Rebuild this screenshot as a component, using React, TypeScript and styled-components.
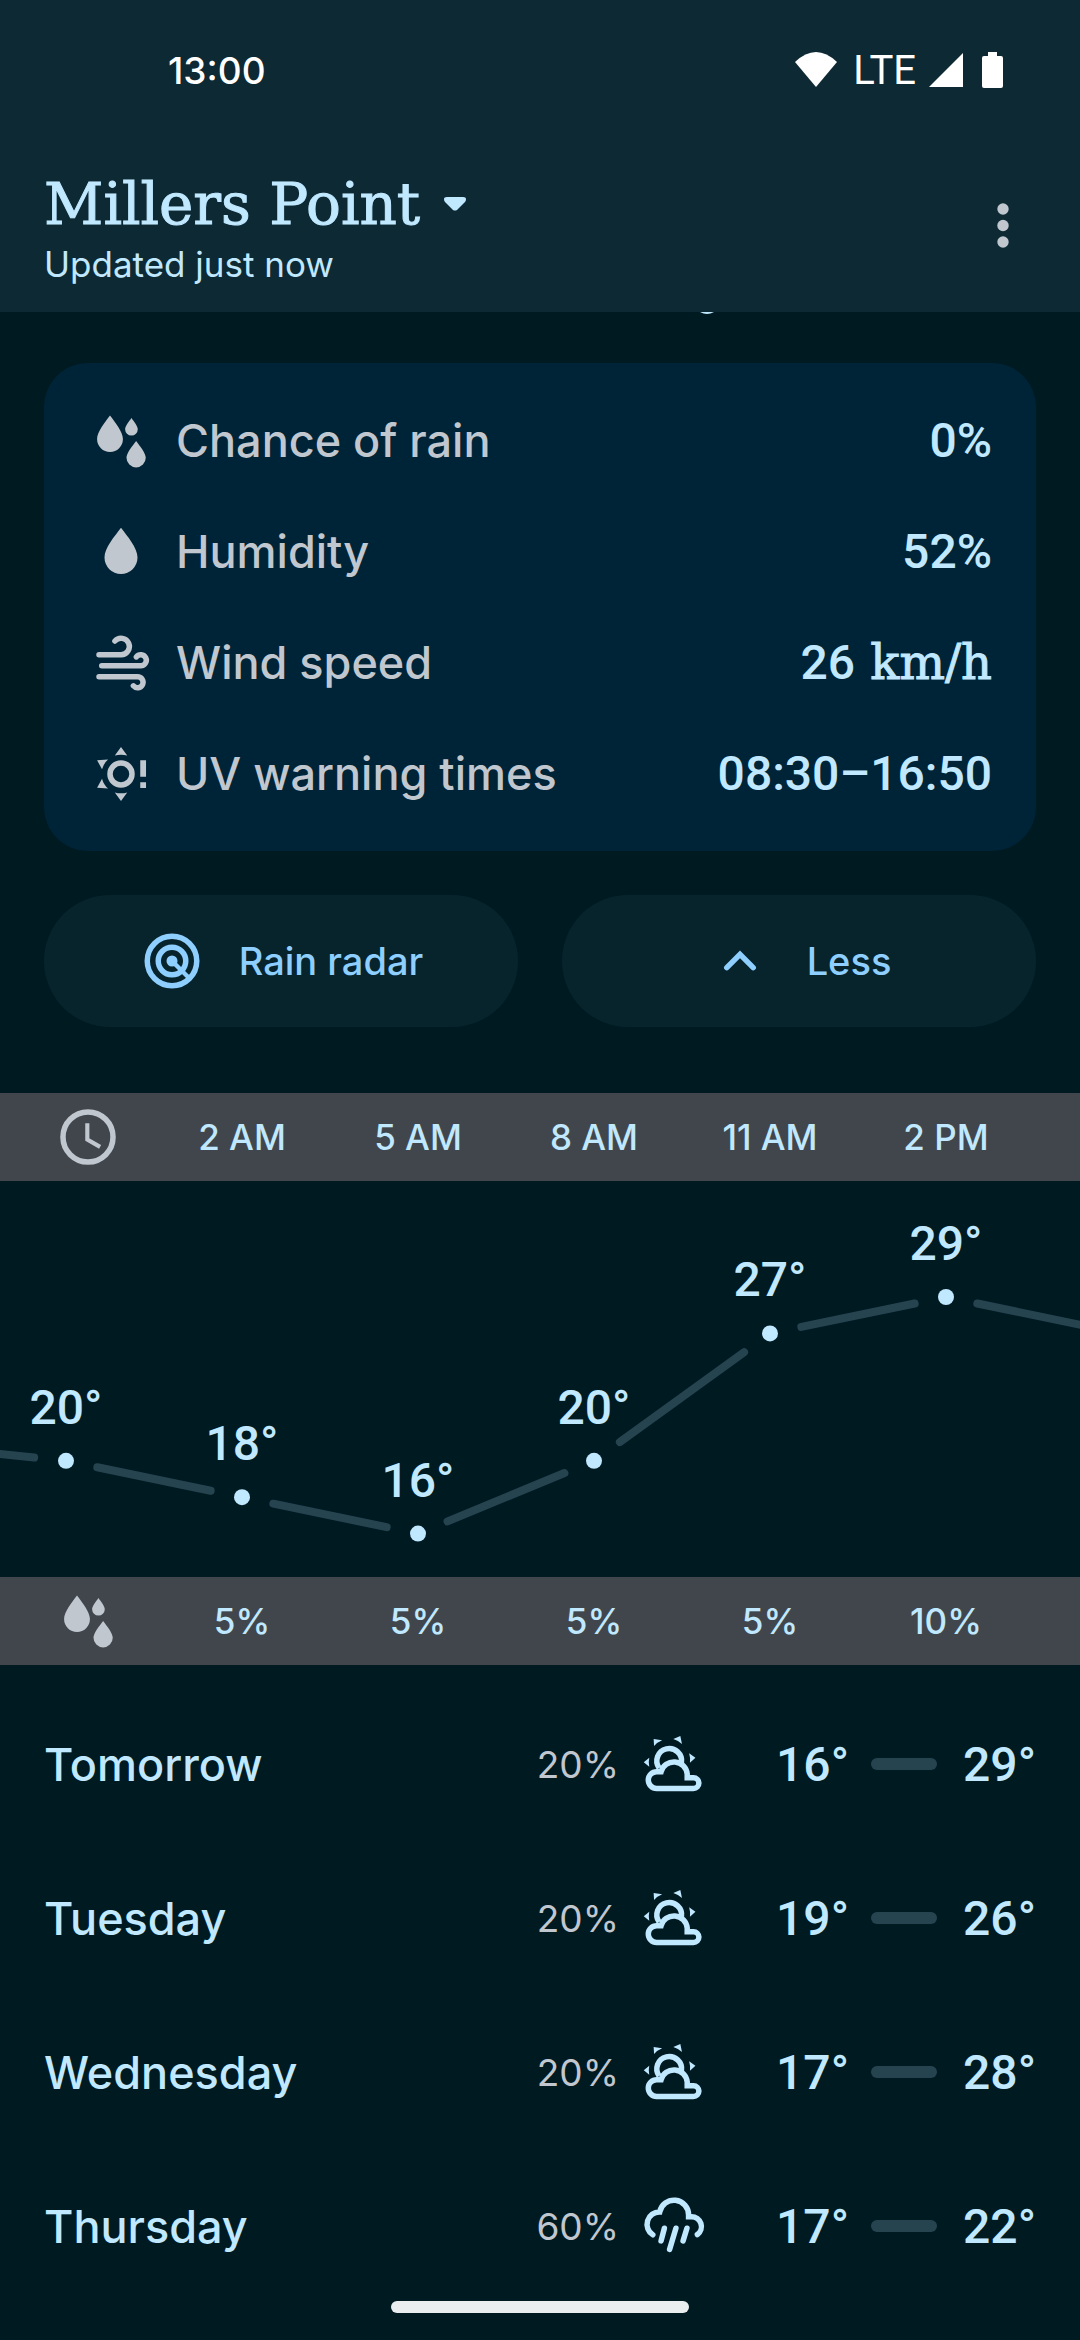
import React from "react";
import styled, { createGlobalStyle } from "styled-components";

const color = {
  page: "#001a22",
  bar: "#0d2934",
  card: "#002437",
  tonal: "#07242d",
  band: "#41464d",
  text: "#c0e8ff",
  muted: "#c0c7cf",
  accent: "#8ecfff",
  line: "#264450",
};

const sans = `Inter, "Noto Sans", sans-serif`;
const slab = `"Roboto Slab", "DejaVu Serif", serif`;
const numerals = `"Roboto Slab", Roboto, sans-serif`;

const GlobalStyle = createGlobalStyle`
  * { box-sizing: border-box; }
  body { margin: 0; background: ${color.page}; font-family: ${sans}; color: ${color.text}; }
  button { border: 0; padding: 0; margin: 0; background: none; color: inherit; font: inherit; cursor: pointer; }
  h1, ul, dl, dd { margin: 0; padding: 0; font-weight: inherit; }
  ul { list-style: none; }
`;

const Screen = styled.div`
  min-height: 100vh;
  overflow: hidden;
`;

const Header = styled.header`
  position: relative;
  padding-bottom: 26px;
  background: ${color.bar};
`;

const StatusBar = styled.div`
  display: flex;
  align-items: center;
  justify-content: space-between;
  height: 140px;
  padding: 0 76px 0 168px;
  color: #fff;
`;

const Clock = styled.span`
  font-size: 37px;
  font-weight: 500;
`;

const StatusIcons = styled.div`
  display: flex;
  align-items: center;
  font: 400 40px Roboto, sans-serif;
`;

const StatusSvg = styled.svg<{ $gap: number }>`
  display: block;
  margin-left: ${(p) => p.$gap}px;
`;

const Network = styled.span`
  margin-left: 16px;
`;

const TitleBar = styled.div`
  display: flex;
  align-items: center;
  justify-content: space-between;
  padding: 26px 44px 0;
`;

const PlaceButton = styled.button`
  && {
    display: flex;
    align-items: center;
    gap: 24px;
    font-family: ${slab};
    font-size: 58px;
    line-height: 76px;
    -webkit-text-stroke: 1px currentColor;
  }
`;

const Updated = styled.p`
  margin: 0;
  font-size: 35px;
  line-height: 44px;
`;

const MenuButton = styled.button`
  display: flex;
  align-items: center;
  justify-content: center;
  width: 66px;
  height: 66px;
`;

const ScrolledText = styled.svg`
  position: absolute;
  top: 100%;
  right: 366px;
  display: block;
`;

const Main = styled.main`
  padding-top: 51px;
`;

const Card = styled.dl`
  && {
    margin: 0 44px;
    padding: 22px 44px;
  }
  border-radius: 44px;
  background: ${color.card};
`;

const Fact = styled.div`
  display: flex;
  align-items: center;
  height: 111px;
`;

const FactName = styled.dt`
  display: flex;
  align-items: center;
  gap: 22px;
  flex: 1;
  font-size: 45px;
  font-weight: 500;
  line-height: 66px;
  color: ${color.muted};
`;

const FactValue = styled.dd`
  font-family: ${numerals};
  font-size: 48px;
  font-weight: 500;
  line-height: 66px;
`;

const Unit = styled.span`
  font-family: ${slab};
  font-weight: 400;
  -webkit-text-stroke: 1px currentColor;
`;

const Actions = styled.div`
  display: grid;
  grid-template-columns: 1fr 1fr;
  gap: 44px;
  padding: 44px 44px 66px;
`;

const Action = styled.button`
  && {
    display: flex;
    align-items: center;
    justify-content: center;
    gap: 34px;
    height: 132px;
    border-radius: 66px;
    background: ${color.tonal};
    color: ${color.accent};
    font-size: 38px;
    font-weight: 500;
  }
`;

const Band = styled.div`
  display: grid;
  grid-template-columns: 154px repeat(5, 176px);
  align-items: center;
  height: 88px;
  background: ${color.band};
  font-size: 35px;
  font-weight: 500;
  text-align: center;
`;

const BandIcon = styled.span`
  display: flex;
  justify-content: center;
  padding-left: 22px;
  color: ${color.muted};
`;

const ChartArea = styled.div`
  overflow: hidden;
`;

const ChartSvg = styled.svg`
  display: block;
  font-family: ${numerals};
  font-size: 48px;
  font-weight: 500;
`;

const Days = styled.ul`
  && {
    padding: 22px 44px 0;
  }
`;

const Day = styled.li`
  display: grid;
  grid-template-columns: 1fr auto 66px 164px 66px 99px;
  align-items: center;
  height: 154px;
`;

const DayName = styled.span`
  font-size: 45px;
  font-weight: 500;
`;

const Chance = styled.span`
  padding-right: 22px;
  font-size: 37px;
  color: ${color.muted};
`;

const Temp = styled.span<{ $gap?: number }>`
  padding-right: ${(p) => p.$gap ?? 0}px;
  font-family: ${numerals};
  font-size: 48px;
  font-weight: 500;
  text-align: right;
`;

const Range = styled.span`
  height: 12px;
  border-radius: 6px;
  background: ${color.line};
`;

const HomeHandle = styled.div`
  position: fixed;
  bottom: 27px;
  left: 50%;
  width: 298px;
  height: 12px;
  margin-left: -149px;
  border-radius: 6px;
  background: #ebeeef;
`;

const IconSvg = styled.svg`
  display: block;
  flex: none;
`;

function Icon({ children }: { children: React.ReactNode }) {
  return (
    <IconSvg width="66" height="66" viewBox="0 0 24 24" fill="currentColor" aria-hidden="true">
      {children}
    </IconSvg>
  );
}

const stroke = {
  fill: "none",
  stroke: "currentColor",
  strokeWidth: 2,
  strokeLinecap: "round" as const,
};

const Drops = () => (
  <Icon>
    <path d="M8 2.7C6.2 5.1 3.3 8.6 3.3 11.3a4.7 4.7 0 0 0 9.4 0C12.7 8.6 9.8 5.1 8 2.7z" />
    <path d="M15.8 3.6C14.9 4.9 13.5 6.6 13.5 7.7a2.3 2.3 0 0 0 4.6 0C18.1 6.6 16.7 4.9 15.8 3.6z" />
    <path d="M17.5 12C16.1 13.9 14 16.4 14 18.1a3.5 3.5 0 0 0 7 0C21 16.4 18.9 13.9 17.5 12z" />
  </Icon>
);

const Drop = () => (
  <Icon>
    <path d="M12 3.2C9.7 6.3 6 10.5 6 14a6 6 0 0 0 12 0C18 10.5 14.3 6.3 12 3.2z" />
  </Icon>
);

const Wind = () => (
  <Icon>
    <g {...stroke}>
      <path d="M4 9H12A3 3 0 1 0 9.8 4" />
      <path d="M5 13H19.2A2 2 0 1 0 17.6 9.8" />
      <path d="M4 17H18A2 2 0 1 1 16.5 20.3" />
    </g>
  </Icon>
);

const Uv = () => (
  <Icon>
    <circle cx="12" cy="12" r="4" {...stroke} />
    <path d="M12 2.2 14.25 5.3A8 8 0 0 0 9.75 5.3zM12 21.8 14.25 18.7A8 8 0 0 1 9.75 18.7z" />
    <path d="M3.3 7 7.3 6.7A7.5 7.5 0 0 0 5.1 10.3zM3.3 17 7.3 17.3A7.5 7.5 0 0 1 5.1 13.7z" />
    <path d="M19 7h2.1v6H19zM19 15h2.1v2.1H19z" />
  </Icon>
);

const Radar = () => (
  <Icon>
    <g {...stroke}>
      <circle cx="12" cy="12" r="9" />
      <circle cx="12" cy="12" r="5" />
      <path d="M12 12 18.2 18.2" strokeWidth={1.6} />
    </g>
    <circle cx="12" cy="12" r="2" />
  </Icon>
);

const ChevronUp = () => (
  <Icon>
    <path d="M7.2 14.4 12 9.6 16.8 14.4" {...stroke} />
  </Icon>
);

const ClockFace = () => (
  <Icon>
    <circle cx="12" cy="12" r="9.1" {...stroke} />
    <path d="M11.75 7V12.9L16.4 15.6" {...stroke} strokeWidth={1.5} strokeLinecap="butt" />
  </Icon>
);

const PartlyCloudy = () => (
  <Icon>
    <g {...stroke} strokeLinecap="butt">
      <path d="M6.6 13.5A4.5 4.5 0 1 1 14.7 11.6" />
      <path d="M5.7 14.8H7.3A4.85 4.85 0 0 1 16.8 15.6V17H19.1A1.95 1.95 0 0 1 19.1 20.9H5.7A3.05 3.05 0 0 1 5.7 14.8z" />
    </g>
    <path d="M4.6 2.9 7.7 3.4A8 8 0 0 0 4.75 5.45zM14.3 1.8 14.9 4.7A8 8 0 0 0 11.75 2.9zM1 11.4 3 9.7A8 8 0 0 0 3 13zM19.8 9.7 17.5 8.1A8 8 0 0 1 17.8 11.5z" />
  </Icon>
);

const Rain = () => (
  <Icon>
    <g {...stroke}>
      <path d="M4.3 15.2A4.5 4.5 0 0 1 6.8 6.9 5.3 5.3 0 0 1 17.3 8V8.6H18.3A3.6 3.6 0 0 1 20.5 15.1" />
      <path d="M8.5 12.8 7.3 17.4M12.7 12.8 10.4 20.5M16.7 12.8 15.3 17.4" />
    </g>
  </Icon>
);

const facts = [
  { name: "Chance of rain", value: "0%", icon: <Drops /> },
  { name: "Humidity", value: "52%", icon: <Drop /> },
  { name: "Wind speed", value: "26", unit: "km/h", icon: <Wind /> },
  { name: "UV warning times", value: "08:30–16:50", icon: <Uv /> },
];

const hours = ["2 AM", "5 AM", "8 AM", "11 AM", "2 PM"];
const rain = ["5%", "5%", "5%", "5%", "10%"];
const temps = [21, 20, 18, 16, 20, 27, 29, 27];

const days = [
  { name: "Tomorrow", chance: "20%", icon: <PartlyCloudy />, low: 16, high: 29 },
  { name: "Tuesday", chance: "20%", icon: <PartlyCloudy />, low: 19, high: 26 },
  { name: "Wednesday", chance: "20%", icon: <PartlyCloudy />, low: 17, high: 28 },
  { name: "Thursday", chance: "60%", icon: <Rain />, low: 17, high: 22 },
];

const STEP = 176;
const GAP = 32;

function TemperatureChart() {
  const points = temps.map((t, i) => ({
    t,
    x: 66 + (i - 1) * STEP,
    y: 116 + (29 - t) * 18.2,
  }));
  return (
    <ChartArea>
      <ChartSvg width="1298" height="396" role="img" aria-label="Hourly temperature">
        {points.slice(1).map((b, i) => {
          const a = points[i];
          const len = Math.hypot(b.x - a.x, b.y - a.y);
          const dx = ((b.x - a.x) / len) * GAP;
          const dy = ((b.y - a.y) / len) * GAP;
          return (
            <line
              key={b.x}
              x1={a.x + dx}
              y1={a.y + dy}
              x2={b.x - dx}
              y2={b.y - dy}
              stroke={color.line}
              strokeWidth="8"
              strokeLinecap="round"
            />
          );
        })}
        {points.slice(1, 7).map((p) => (
          <g key={p.x} fill={color.text}>
            <circle cx={p.x} cy={p.y} r="8" />
            <text x={p.x} y={p.y - 37} textAnchor="middle">
              {p.t}°
            </text>
          </g>
        ))}
      </ChartSvg>
    </ChartArea>
  );
}

export default function App() {
  return (
    <Screen>
      <GlobalStyle />
      <Header>
        <StatusBar>
          <Clock>13:00</Clock>
          <StatusIcons>
            <StatusSvg $gap={0} width="42" height="36" viewBox="0 0 42 36" fill="#fff">
              <path d="M0 10Q21-10 42 10L21 35z" />
            </StatusSvg>
            <Network>LTE</Network>
            <StatusSvg $gap={12} width="36" height="36" viewBox="0 0 36 36" fill="#fff">
              <path d="M35 1V35H1z" />
            </StatusSvg>
            <StatusSvg $gap={18} width="22" height="36" viewBox="0 0 22 36" fill="#fff">
              <path d="M6 0h9v4h4q2 0 2 2v28q0 2-2 2H2q-2 0-2-2V6q0-2 2-2h4z" />
            </StatusSvg>
          </StatusIcons>
        </StatusBar>
        <TitleBar>
          <div>
            <h1>
              <PlaceButton>
                Millers Point
                <svg width="22" height="14" viewBox="0 0 22 14" fill="currentColor" aria-hidden="true">
                  <path d="M3 0h16q3 0 3 2 0 2-1 3l-8 8q-2 1-4 0L1 5Q0 4 0 2 0 0 3 0z" />
                </svg>
              </PlaceButton>
            </h1>
            <Updated>Updated just now</Updated>
          </div>
          <MenuButton aria-label="More options">
            <svg width="12" height="46" viewBox="0 0 12 46" fill={color.muted}>
              <circle cx="6" cy="6" r="5.7" />
              <circle cx="6" cy="22.5" r="5.7" />
              <circle cx="6" cy="39" r="5.7" />
            </svg>
          </MenuButton>
        </TitleBar>
        <ScrolledText width="14" height="3" viewBox="0 0 14 3" fill={color.text}>
          <path d="M0 0H14Q7 4 0 0z" />
        </ScrolledText>
      </Header>
      <Main>
        <Card>
          {facts.map((f) => (
            <Fact key={f.name}>
              <FactName>
                {f.icon}
                {f.name}
              </FactName>
              <FactValue>
                {f.value}
                {f.unit && <Unit> {f.unit}</Unit>}
              </FactValue>
            </Fact>
          ))}
        </Card>
        <Actions>
          <Action>
            <Radar />
            Rain radar
          </Action>
          <Action>
            <ChevronUp />
            Less
          </Action>
        </Actions>
        <Band>
          <BandIcon>
            <ClockFace />
          </BandIcon>
          {hours.map((h) => (
            <span key={h}>{h}</span>
          ))}
        </Band>
        <TemperatureChart />
        <Band>
          <BandIcon>
            <Drops />
          </BandIcon>
          {rain.map((r, i) => (
            <span key={hours[i]}>{r}</span>
          ))}
        </Band>
        <Days>
          {days.map((d) => (
            <Day key={d.name}>
              <DayName>{d.name}</DayName>
              <Chance>{d.chance}</Chance>
              {d.icon}
              <Temp $gap={22}>{d.low}°</Temp>
              <Range />
              <Temp>{d.high}°</Temp>
            </Day>
          ))}
        </Days>
      </Main>
      <HomeHandle />
    </Screen>
  );
}
